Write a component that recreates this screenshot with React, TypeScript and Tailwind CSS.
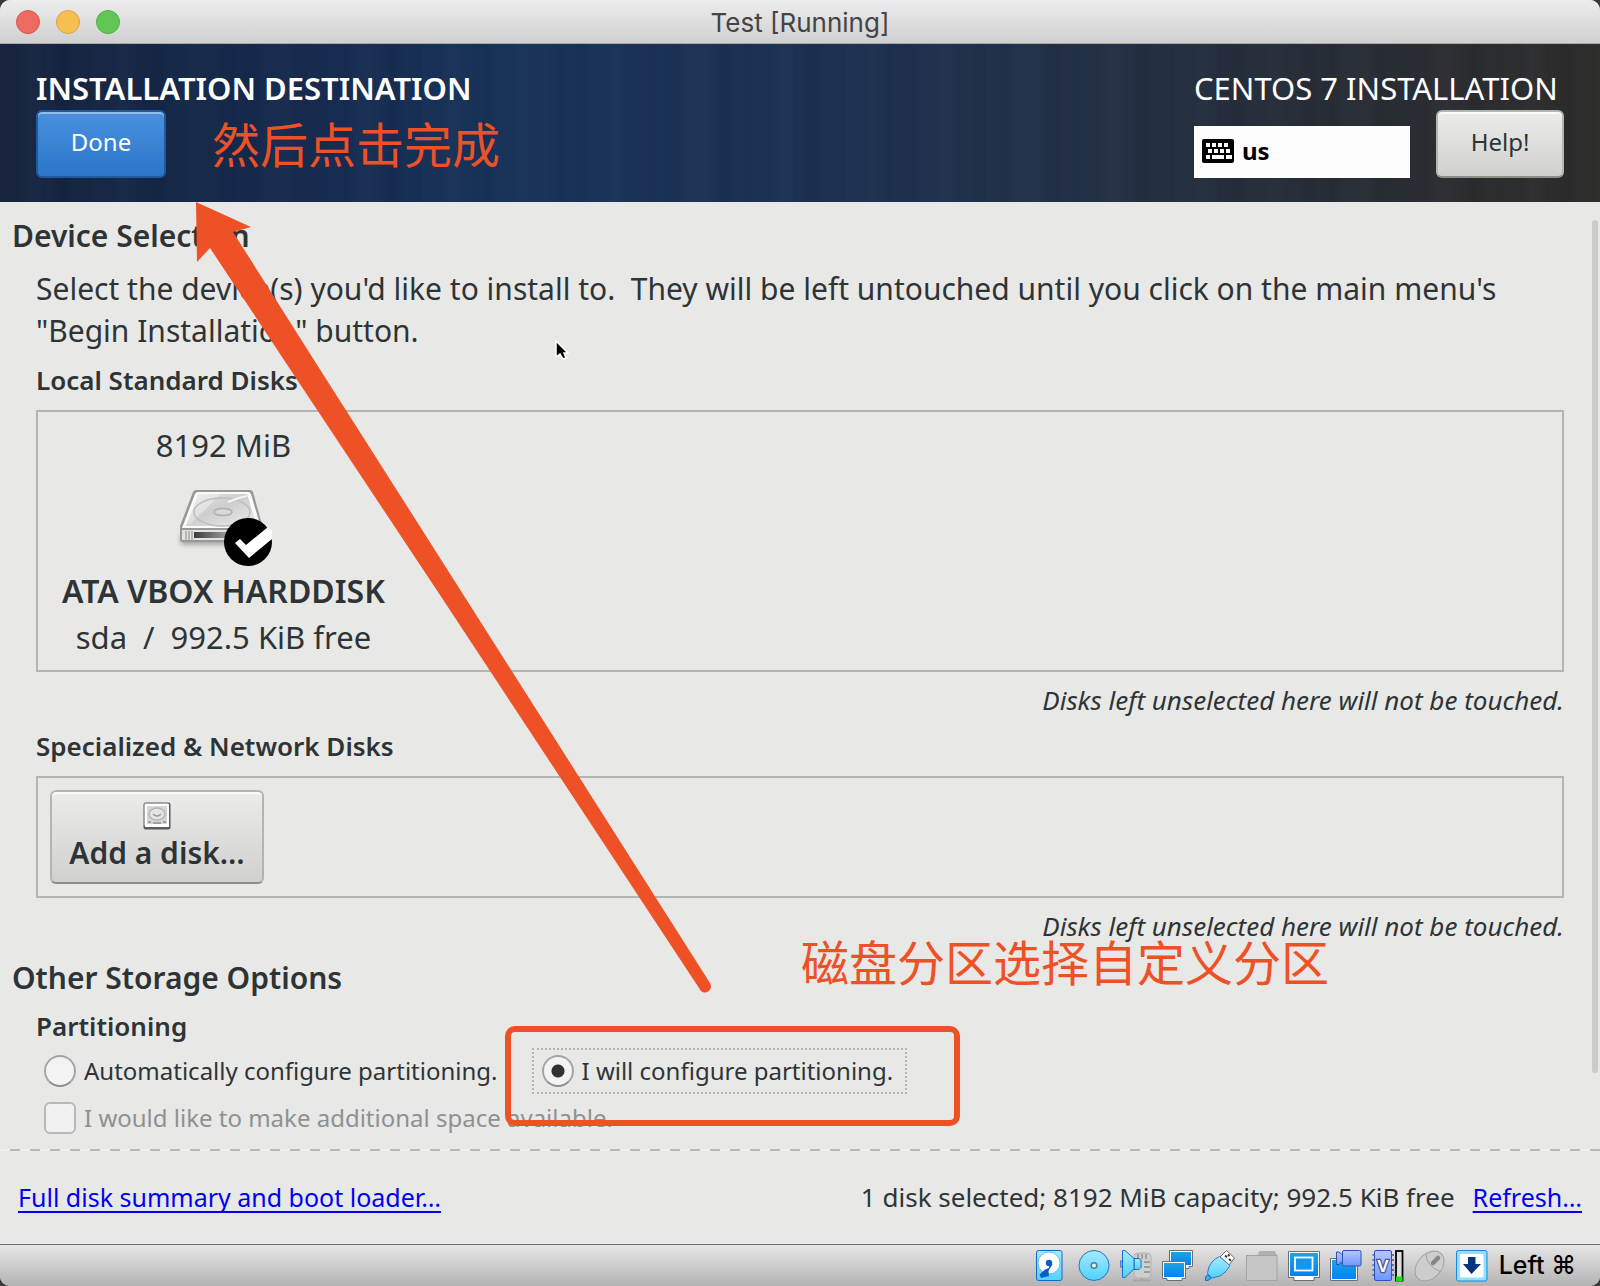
import React from "react";

const silver =
  "rounded-md border-2 border-[#b4b4b0] border-b-[#8e8e88] bg-linear-to-b from-[#ececea] to-[#d0d0ce] shadow-[inset_0_2px_0_#fafafa]";
const radioStyle =
  "size-8 shrink-0 appearance-none rounded-full border-2 border-[#a5a5a0] border-b-[#8e8e88] bg-[#f3f3f3]";

function KeyboardIcon() {
  const keys = [
    [4, 4], [10, 4], [16, 4], [22, 4],
    [6, 10], [12, 10], [18, 10], [24, 10],
    [4, 16], [24, 16],
  ];
  return (
    <svg width="32" height="24" viewBox="0 0 32 24" aria-hidden="true" className="shrink-0">
      <rect width="32" height="24" rx="2" fill="#000" />
      {keys.map(([x, y]) => (
        <rect key={`${x}-${y}`} x={x} y={y} width={x === 24 && y === 16 ? 6 : 4} height="4" fill="#fff" />
      ))}
      <rect x="10" y="16" width="12" height="4" fill="#fff" />
    </svg>
  );
}

function HardDisk() {
  return (
    <svg width="112" height="104" viewBox="167 466 112 104" role="img" aria-label="Selected disk">
      <defs>
        <linearGradient id="top" x1="0" y1="0" x2="1" y2="1">
          <stop offset="0" stopColor="#e6e6e6" />
          <stop offset="0.45" stopColor="#cdcdcd" />
          <stop offset="1" stopColor="#eeeeee" />
        </linearGradient>
        <linearGradient id="front" x1="0" y1="0" x2="1" y2="0">
          <stop offset="0" stopColor="#3c3c3c" />
          <stop offset="1" stopColor="#cfcfcf" />
        </linearGradient>
        <filter id="soft" x="-20%" y="-20%" width="140%" height="160%">
          <feGaussianBlur stdDeviation="2" />
        </filter>
      </defs>
      <rect x="180" y="534" width="82" height="11" rx="4" fill="#777" opacity="0.55" filter="url(#soft)" />
      <path d="M196 490H250Q252 490 253 492L263 528V539Q263 542 260 542H183Q180 542 180 539V526L193 492Q194 490 196 490Z" fill="#989894" />
      <path d="M197 492H249L251 494L261 528H182L195 494Z" fill="#fbfbfb" />
      <path d="M199 494H247L257 526H186L198 495Z" fill="url(#top)" />
      <path d="M199 494H220L205 510L190 524H186Z" fill="#fff" opacity="0.35" />
      <ellipse cx="222" cy="512" rx="28" ry="14" fill="none" stroke="#bdbdbd" strokeWidth="1.5" />
      <path d="M228 502Q240 497 247 496" fill="none" stroke="#f5f5f5" strokeWidth="2" />
      <ellipse cx="223" cy="512" rx="9" ry="3.500" fill="#d9d9d9" stroke="#acacac" strokeWidth="1.500" />
      <path d="M182 530H261V540H182Z" fill="#e2e2e2" />
      <path d="M194 532H245V538H194Z" fill="url(#front)" />
      <path d="M186 531V540M189 531V540M192 531V540" stroke="#8d8d8d" strokeWidth="1" />
      <circle cx="248" cy="542" r="24" fill="#000" />
      <path d="M235 543L240 539L246 545L268 527L272 530V539L249 558Z" fill="#fff" />
    </svg>
  );
}

function SmallDisk() {
  return (
    <svg width="28" height="28" viewBox="0 0 28 28" aria-hidden="true">
      <rect x="0.5" y="0.5" width="27" height="27" rx="2" fill="#5d5d57" />
      <rect x="1" y="1" width="25" height="23" rx="1.5" fill="#a9a9a6" />
      <rect x="2" y="2" width="24" height="23" fill="#fff" />
      <rect x="4" y="4" width="20" height="18" fill="#d6d6d6" />
      <ellipse cx="14" cy="12" rx="8" ry="6" fill="#e4e4e4" stroke="#b5b5b5" strokeWidth="1.5" />
      <path d="M10 12Q14 16 18 12" fill="none" stroke="#999" strokeWidth="1.5" />
      <path d="M5 20H8M20 20H23M10 21H18" stroke="#8f8f8f" strokeWidth="1.5" />
    </svg>
  );
}

function StatusIcons() {
  const box = { width: 32, height: 32, viewBox: "0 0 32 32" };
  return (
    <div className="flex items-center gap-[10px]">
      <svg width="0" height="0" className="absolute" aria-hidden="true">
        <defs>
          <linearGradient id="cyan" x1="0" y1="0" x2="0" y2="1">
            <stop offset="0" stopColor="#a6e9ff" />
            <stop offset="1" stopColor="#4fd2fb" />
          </linearGradient>
          <linearGradient id="screen" x1="0" y1="0" x2="0" y2="1">
            <stop offset="0" stopColor="#1aa6e0" />
            <stop offset="1" stopColor="#0380fb" />
          </linearGradient>
          <linearGradient id="violet" x1="0" y1="0" x2="0" y2="1">
            <stop offset="0" stopColor="#b4c8ff" />
            <stop offset="1" stopColor="#6d97ff" />
          </linearGradient>
        </defs>
      </svg>
      <svg {...box} role="img" aria-label="Hard disks">
        <rect x="0.5" y="0.5" width="25.5" height="30" rx="2" fill="url(#cyan)" stroke="#1268c8" />
        <circle cx="13" cy="13" r="11" fill="#fff" stroke="#5aa8e8" strokeWidth="0.8" />
        <circle cx="13" cy="13" r="3.2" fill="#0a5bc8" />
        <path d="M13 12L16.500 14L12.500 21L13 26L5 28L3.500 24.500L9 19.500L13 18Z" fill="#0a5bc8" />
      </svg>
      <svg {...box} role="img" aria-label="Optical drives">
        <circle cx="16" cy="15.500" r="15" fill="url(#cyan)" stroke="#1b76d2" />
        <circle cx="16" cy="15.500" r="2.800" fill="#e0f4fa" stroke="#4a7f9c" strokeWidth="1.600" />
      </svg>
      <svg {...box} role="img" aria-label="Audio">
        <rect x="14" y="3" width="17" height="25" rx="4" fill="#cfcfcf" stroke="#b2b2b2" />
        <path d="M18 4V9M22 4V9M26 4V9M24 12H30M24 17H30M24 22H30" stroke="#9c9c9c" strokeWidth="1.800" />
        <path d="M22 28V30M13 30.500H31" stroke="#a6a6a6" strokeWidth="2" />
        <rect x="0.800" y="11" width="3" height="6" fill="#7fdcfa" stroke="#1b6fd0" />
        <path d="M14 8.500H19L21 10V17.500L19 19.500H14Z" fill="url(#cyan)" stroke="#1b6fd0" />
        <path d="M2.500 0.500H5L14 8.500V19L5 27.500H2.500Z" fill="url(#cyan)" stroke="#1b6fd0" />
      </svg>
      <svg {...box} role="img" aria-label="Network">
        <path d="M7.500 0.500H30.500V16.500H27V18.500H7.500Z" fill="#fff" stroke="#6d6d6d" />
        <rect x="9" y="2" width="20" height="13" fill="url(#screen)" />
        <path d="M0.500 11.500H23.500V28.500H20V30.500H5V28.500H0.500Z" fill="#fff" stroke="#6d6d6d" />
        <rect x="2" y="13" width="20" height="14" fill="url(#screen)" />
      </svg>
      <svg {...box} role="img" aria-label="USB">
        <path d="M22.500 0.500L30.500 8L25 15L16 7Z" fill="#fff" stroke="#6d6d6d" />
        <path d="M21 5.500L23 7.200M25 9L27 10.700M24 4.500L25.500 6" stroke="#333" strokeWidth="1.800" />
        <path d="M15.500 6.500L26 15.500Q23 22 16 26L8 28L3.500 23.500Q4 16 8 12Q11 8.500 15.500 6.500Z" fill="url(#cyan)" stroke="#2f80c4" />
        <path d="M3.500 24.500L7.500 28L4 30.500H1.500V27Z" fill="#3fa9e6" stroke="#1b6fd0" />
      </svg>
      <svg {...box} role="img" aria-label="Shared folders">
        <path d="M11 6L13.500 1H29L31 6Z" fill="#b1b1b1" />
        <rect x="0.500" y="5.500" width="30.500" height="25" fill="#c6c6c6" stroke="#a4a4a4" />
      </svg>
      <svg {...box} role="img" aria-label="Display">
        <path d="M0.500 1.500H31.500V27.500H26V30.500H6V27.500H0.500Z" fill="#fff" stroke="#6d6d6d" />
        <rect x="2" y="3" width="28" height="23" fill="url(#screen)" />
        <rect x="7" y="7.500" width="17.500" height="13" fill="#1495ee" stroke="#fff" strokeWidth="1.800" />
      </svg>
      <svg {...box} role="img" aria-label="Recording">
        <path d="M0.500 8.500H27.500V30.500H0.500Z" fill="#fff" stroke="#6d6d6d" />
        <rect x="2" y="10" width="24" height="19" fill="url(#screen)" />
        <path d="M6.500 2H9L13 5.500V11L9 14.500H6.500Z" fill="url(#violet)" stroke="#3350b8" />
        <rect x="12.500" y="0.500" width="18.500" height="15.500" rx="1.500" fill="url(#violet)" stroke="#3350b8" />
      </svg>
      <svg {...box} role="img" aria-label="Processor">
        <path d="M0.500 5H22M0.500 10H22M0.500 15H22M0.500 20H22M0.500 25H22" stroke="#3c55c0" strokeWidth="1.600" />
        <rect x="2.500" y="0.500" width="17" height="30" rx="1.500" fill="url(#violet)" stroke="#3350b8" />
        <text x="11" y="21.500" textAnchor="middle" fill="#fff" stroke="#4a5590" strokeWidth="2.500" paintOrder="stroke" className="font-['Liberation_Sans'] text-[17px] font-bold">V</text>
        <rect x="24" y="1" width="6.500" height="29.500" fill="#dedede" stroke="#000" strokeWidth="1.800" />
        <path d="M24 26.500H30.500V31H24Z" fill="#14e60a" />
      </svg>
      <svg {...box} role="img" aria-label="Mouse integration">
        <g fill="none" stroke="#a0a0a0">
          <ellipse cx="15.500" cy="16" rx="12" ry="17" transform="rotate(42 15.500 16)" fill="#cdcdcd" />
          <path d="M12 3.500Q12 16 27 22" />
        </g>
        <path d="M19 13L24 8" stroke="#858585" strokeWidth="4.500" strokeLinecap="round" />
      </svg>
      <svg {...box} role="img" aria-label="Keyboard capture">
        <rect x="0.500" y="0.500" width="30.500" height="30.500" rx="2" fill="#8fe2fb" stroke="#1b86e0" />
        <rect x="4" y="4" width="23.500" height="23.500" rx="1" fill="#fff" />
        <path d="M12 7H19.500V14H25L15.500 24L7 14H12Z" fill="#08347e" />
      </svg>
    </div>
  );
}

export default function App() {
  return (
    <div className="min-h-screen bg-[#3a3a3c] font-['Noto_Sans','Noto_Sans_CJK_SC',sans-serif] text-[#2e3436]">
      <div className="relative flex min-h-screen flex-col overflow-hidden rounded-[10px] bg-[#e8e8e6]">
        <div className="relative flex h-11 items-center border-b border-[#a9a9a9] bg-linear-to-b from-[#ededed] to-[#d0d0d0] px-4">
          <div className="flex gap-4">
            <button aria-label="Close" className="size-6 rounded-full border border-[#d9564d] bg-[#ed6b60]" />
            <button aria-label="Minimize" className="size-6 rounded-full border border-[#dba240] bg-[#f5c04f]" />
            <button aria-label="Zoom" className="size-6 rounded-full border border-[#4fae42] bg-[#62c655]" />
          </div>
          <h1 className="flex-1 pt-0.5 pr-26 text-center font-[Inter] text-[26px] leading-8 text-[#444]">Test [Running]</h1>
        </div>

        <header className="flex h-[158px] justify-between bg-[repeating-linear-gradient(90deg,#ffffff02_0px,#ffffff00_11px,#00000008_17px,#ffffff02_29px,#00000000_47px),repeating-linear-gradient(90deg,#00000000_0px,#ffffff04_37px,#00000006_61px,#00000000_83px),linear-gradient(90deg,#16233d_0px,#14284a_210px,#162b50_340px,#173259_490px,#1b3052_800px,#213047_1060px,#252d39_1280px,#2b2c2e_1500px,#2c2c2b_1600px)] px-9 pt-6 text-white">
          <div>
            <h2 className="mb-px text-[31px] leading-[41px] font-semibold">INSTALLATION DESTINATION</h2>
            <div className="flex gap-[46px]">
              <button className="h-[68px] w-[130px] rounded-md border-2 border-[#1f5a9c] bg-linear-to-b from-[#4a90df] to-[#2a76c8] pb-1 text-2xl shadow-[inset_0_2px_0_#8fbcf0]">Done</button>
              <p className="pt-0.5 font-['Noto_Sans_CJK_SC',sans-serif] text-[48px] leading-[60px] font-normal text-[#ee5126]">然后点击完成</p>
            </div>
          </div>
          <div>
            <p className="mb-px text-[31px] leading-[41px]">CENTOS 7 INSTALLATION</p>
            <div className="flex items-end justify-between gap-[26px]">
              <button className="flex h-[52px] w-[216px] items-center gap-2 bg-[#fdfdfd] px-2 pb-0.5 text-2xl font-bold text-black">
                <KeyboardIcon />
                us
              </button>
              <button className={`h-[68px] w-32 pb-1 text-2xl text-[#2e3436] ${silver}`}>Help!</button>
            </div>
          </div>
        </header>

        <main className="relative flex-1 pt-3.5 pr-9 pb-3.5 pl-3">
          <h2 className="text-[30px] leading-10 font-semibold">Device Selection</h2>
          <div className="pl-6">
            <p className="mt-3 text-[30px] leading-[42px] whitespace-pre-wrap">
              {"Select the device(s) you'd like to install to.  They will be left untouched until you click on the main menu's \"Begin Installation\" button."}
            </p>
            <h3 className="mt-3 text-[26px] leading-8 font-semibold">Local Standard Disks</h3>
            <div className="mt-3.5 flex border-2 border-[#b4b4b2] px-6 py-3">
              <div className="flex flex-col items-center text-[31px] leading-[42px]">
                <p>8192 MiB</p>
                <HardDisk />
                <p className="text-[32px] font-semibold">ATA VBOX HARDDISK</p>
                <p className="mt-1 flex gap-4">
                  <span>sda</span>
                  <span>/</span>
                  <span>992.5 KiB free</span>
                </p>
              </div>
            </div>
            <p className="mt-3 text-right text-[26px] leading-8 italic">Disks left unselected here will not be touched.</p>
            <h3 className="mt-3.5 text-[26px] leading-8 font-semibold">Specialized &amp; Network Disks</h3>
            <div className="mt-3.5 border-2 border-[#b4b4b2] p-3">
              <button className={`flex h-[94px] w-[214px] flex-col items-center gap-0.5 pt-2.5 text-[30px] leading-[42px] font-semibold ${silver}`}>
                <SmallDisk />
                Add a disk…
              </button>
            </div>
            <p className="mt-3 text-right text-[26px] leading-8 italic">Disks left unselected here will not be touched.</p>
          </div>
          <h2 className="mt-4 text-[30px] leading-10 font-semibold">Other Storage Options</h2>
          <div className="pl-6">
            <h3 className="mt-3 text-[26px] leading-8 font-semibold">Partitioning</h3>
            <div className="mt-1.5 flex items-center gap-[34px] pl-2">
              <label className="flex items-center gap-2 text-2xl">
                <input type="radio" name="partitioning" className={radioStyle} />
                Automatically configure partitioning.
              </label>
              <div className="relative">
                <label className="flex h-[46px] items-center gap-2 border-2 border-dotted border-[#b4b4b2] pr-3 pl-2 text-2xl">
                  <input
                    type="radio"
                    name="partitioning"
                    defaultChecked
                    className={`${radioStyle} checked:bg-[radial-gradient(circle,#2e3436_6px,#f3f3f3_7px)]`}
                  />
                  I will configure partitioning.
                </label>
                <div className="pointer-events-none absolute -top-[22px] -right-[53px] -bottom-8 -left-[27px] rounded-[10px] border-6 border-[#ee5126]" />
              </div>
            </div>
            <label className="mt-2 flex items-center gap-2 pl-2 text-2xl leading-8 text-[#8e9192]">
              <input type="checkbox" disabled className="size-8 shrink-0 appearance-none rounded-md border-2 border-[#b8b8b6] bg-[#f1f1f1]" />
              I would like to make additional space available.
            </label>
          </div>
          <div className="absolute top-[18px] right-0.5 bottom-[76px] w-1.5 rounded-full bg-[#cbcbca]" />
          <p className="pointer-events-none absolute top-[728px] left-[801px] font-['Noto_Sans_CJK_SC',sans-serif] text-[48px] leading-[60px] font-normal text-[#ee5126]">
            磁盘分区选择自定义分区
          </p>
        </main>

        <div className="h-0.5 bg-[repeating-linear-gradient(90deg,#f0f0ee_0px_10px,#b8b8b6_10px_20px)]" />

        <footer className="flex h-[93px] items-center justify-between px-[18px] pb-0.5">
          <a href="#summary" className="text-[25px] leading-8 text-[#0000f5] underline decoration-2 underline-offset-4 [text-decoration-skip-ink:none]">
            Full disk summary and boot loader…
          </a>
          <div className="flex items-center gap-[18px]">
            <span className="text-[26px] leading-8">1 disk selected; 8192 MiB capacity; 992.5 KiB free</span>
            <a href="#refresh" className="text-[25px] leading-8 text-[#0000f5] underline decoration-2 underline-offset-4 [text-decoration-skip-ink:none]">
              Refresh…
            </a>
          </div>
        </footer>

        <div className="flex h-[42px] items-center justify-end gap-[11px] border-t border-[#6e6e6e] bg-linear-to-b from-[#e6e6e6] to-[#b3b3b3] pr-6 font-[Inter] text-[25px] font-medium text-black">
          <StatusIcons />
          <span>Left ⌘</span>
        </div>

        <svg width="530" height="800" viewBox="190 200 530 800" aria-hidden="true" className="pointer-events-none absolute top-[200px] left-[190px]">
          <path d="M196 202L251 227L233 232L314 360L440 558L710 983Q713 989 707 992Q702 994 699 988L440 595L284 360L210 248L197 262Z" fill="#ee5126" />
          <path d="M556 341V357L560 354L563 359L566 358L564 353H568Z" fill="#000" stroke="#fff" strokeWidth="1.500" />
        </svg>
      </div>
    </div>
  );
}
